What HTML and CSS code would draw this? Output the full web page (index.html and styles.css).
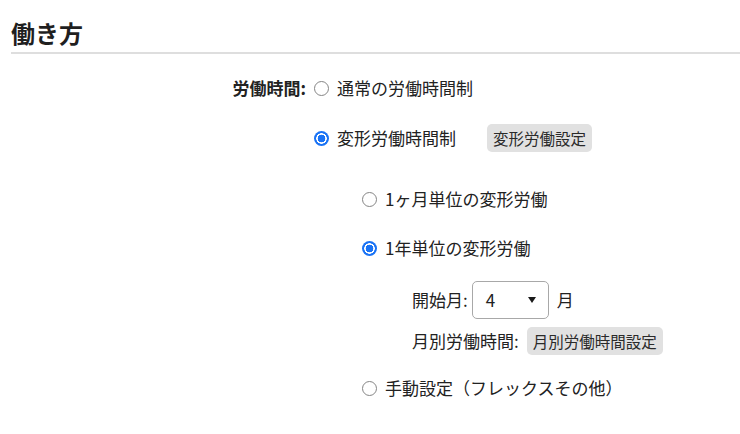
FILE: index.html
```html
<!DOCTYPE html>
<html lang="ja">
<head>
<meta charset="utf-8">
<link rel="stylesheet" href="styles.css">
</head>
<body>
<div class="page">
  <h2 class="title">働き方</h2>
  <div class="form">
    <div class="label">労働時間:</div>
    <div class="options">
      <label class="row row-1"><input type="radio" name="wt" class="radio"><span class="txt">通常の労働時間制</span></label>
      <div class="row row-2">
        <label class="opt"><input type="radio" name="wt" class="radio" checked><span class="txt">変形労働時間制</span></label>
        <button class="btn btn-1">変形労働設定</button>
      </div>
      <div class="sub">
        <label class="row row-3"><input type="radio" name="vt" class="radio"><span class="txt">1ヶ月単位の変形労働</span></label>
        <label class="row row-4"><input type="radio" name="vt" class="radio" checked><span class="txt">1年単位の変形労働</span></label>
        <div class="params">
          <div class="row row-5">
            <span class="plabel">開始月:</span>
            <div class="select"><span class="sval">4</span><span class="arrow"></span></div>
            <span class="unit">月</span>
          </div>
          <div class="row row-6">
            <span class="plabel">月別労働時間:</span>
            <button class="btn btn-2">月別労働時間設定</button>
          </div>
        </div>
        <label class="row row-7"><input type="radio" name="vt" class="radio"><span class="txt">手動設定（フレックスその他）</span></label>
      </div>
    </div>
  </div>
</div>
</body>
</html>
```

FILE: styles.css
```css
html, body {
  margin: 0;
  padding: 0;
  background: #ffffff;
}
body {
  font-family: "Noto Sans CJK JP", "Noto Sans", sans-serif;
  color: #222222;
  font-size: 17px;
}
.page {
  padding: 18px 0 0 11px;
}
.title {
  margin: 0;
  font-size: 24px;
  line-height: 30px;
  font-weight: 700;
  color: #1f1f1f;
  padding-bottom: 4px;
  border-bottom: 2px solid #dedede;
}
.form {
  display: flex;
  margin-top: 22px;
}
.label {
  width: 295px;
  text-align: right;
  font-weight: 700;
  height: 24px;
  line-height: 24px;
  flex: none;
}
.options {
  display: flex;
  flex-direction: column;
  padding-left: 8px;
}
.row {
  display: flex;
  align-items: center;
}
.opt {
  display: flex;
  align-items: center;
}
.radio {
  -webkit-appearance: none;
  appearance: none;
  box-sizing: border-box;
  width: 15px;
  height: 15px;
  margin: 0;
  flex: none;
  border: 1.3px solid #858585;
  border-radius: 50%;
  background: #ffffff;
}
.radio:checked {
  border: none;
  background: radial-gradient(circle, #1a73f5 0 3.6px, #ffffff 4.1px 5px, #1a73f5 5.5px);
}
.txt {
  margin-left: 8px;
  line-height: 24px;
}
.row-1 { height: 24px; }
.row-2 { height: 30px; margin-top: 23px; }
.btn {
  font-family: "Noto Sans CJK JP", "Noto Sans", sans-serif;
  font-size: 15.5px;
  color: #2a2a2a;
  background: #e1e1e1;
  border: none;
  border-radius: 5px;
  height: 28px;
  line-height: 28px;
  padding: 0 6px;
  margin: 0;
}
.btn-1 { margin-left: 31px; }
.sub {
  display: flex;
  flex-direction: column;
  padding-left: 48px;
}
.row-3 { height: 24px; margin-top: 34px; }
.row-4 { height: 24px; margin-top: 25px; }
.params {
  display: flex;
  flex-direction: column;
  padding-left: 50px;
}
.row-5 { height: 38px; margin-top: 21px; }
.row-6 { height: 28px; margin-top: 8px; }
.row-7 { height: 24px; margin-top: 21px; }
.plabel { line-height: 24px; }
.select {
  display: flex;
  align-items: center;
  justify-content: space-between;
  box-sizing: border-box;
  width: 77px;
  height: 38px;
  margin-left: 4px;
  padding: 0 12px 0 13px;
  border: 1px solid #a8a8a8;
  border-radius: 5px;
  background: #ffffff;
}
.sval { line-height: 24px; }
.arrow {
  width: 0;
  height: 0;
  border-left: 4.5px solid transparent;
  border-right: 4.5px solid transparent;
  border-top: 6px solid #1a1a1a;
}
.unit { margin-left: 8px; line-height: 24px; }
.btn-2 { margin-left: 8px; }
```
